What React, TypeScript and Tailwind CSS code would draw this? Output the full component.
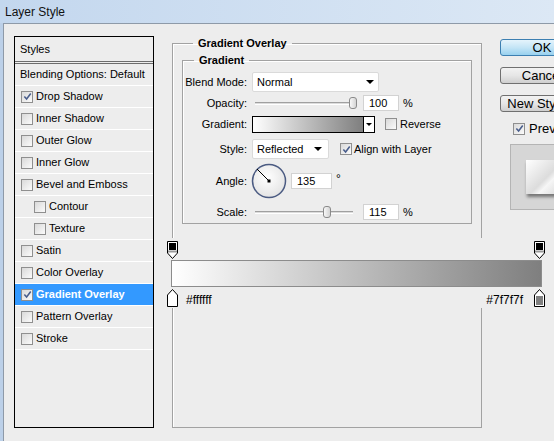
import React from 'react'

type Item = { label: string; on?: boolean; sub?: boolean; active?: boolean }

const styleItems: Item[] = [
  { label: 'Drop Shadow', on: true },
  { label: 'Inner Shadow' },
  { label: 'Outer Glow' },
  { label: 'Inner Glow' },
  { label: 'Bevel and Emboss' },
  { label: 'Contour', sub: true },
  { label: 'Texture', sub: true },
  { label: 'Satin' },
  { label: 'Color Overlay' },
  { label: 'Gradient Overlay', on: true, active: true },
  { label: 'Pattern Overlay' },
  { label: 'Stroke' },
]

// small windows-style checkbox
function Check({ on = false }: { on?: boolean }) {
  return (
    <span className="flex h-[12px] w-[12px] shrink-0 items-center justify-center border border-[#8f8f8f] bg-gradient-to-br from-[#d9d9d9] to-[#fbfbfb]">
      {on && (
        <svg viewBox="0 0 10 10" className="h-[9px] w-[9px]">
          <path d="M1.5 5 L4 7.8 L8.6 1.6" fill="none" stroke="#4a5e8c" strokeWidth="1.7" />
        </svg>
      )}
    </span>
  )
}

function Caret() {
  return (
    <svg viewBox="0 0 8 4" className="h-[4px] w-[8px]">
      <path d="M0 0 H8 L4 4 Z" fill="#000" />
    </svg>
  )
}

function Slider({ pos }: { pos: number }) {
  return (
    <div className="relative flex h-[16px] w-[104px] items-center px-[3px]">
      <div className="h-[3px] w-full border-t border-[#a0a0a0] border-b border-b-white bg-[#dcdcdc]" />
      <div
        className="absolute top-[2px] h-[12px] w-[8px] rounded-[3px] border border-[#8a8a8a] bg-gradient-to-r from-[#f8f8f8] to-[#d4d4d4]"
        style={{ left: pos }}
      />
    </div>
  )
}

function Field({ value, w = 'w-[36px]' }: { value: string; w?: string }) {
  return (
    <div className={`${w} flex h-[16px] items-center border border-[#d2d2d2] bg-white pl-[5px] text-[11px]`}>
      {value}
    </div>
  )
}

function TopStop() {
  return (
    <svg viewBox="0 0 11 18" className="h-[18px] w-[11px]">
      <path d="M0.5 0.5 H10.5 V12 L5.5 17.5 L0.5 12 Z" fill="#fff" stroke="#000" />
      <rect x="2" y="2" width="7" height="7" fill="#000" />
      <rect x="1" y="9.5" width="9" height="2" fill="#9a9a9a" />
    </svg>
  )
}

function BottomStop({ fill }: { fill: string }) {
  return (
    <svg viewBox="0 0 11 18" className="h-[18px] w-[11px]">
      <path d="M5.5 0.5 L10.5 6 V17.5 H0.5 V6 Z" fill="#fff" stroke="#000" />
      <rect x="2" y="7" width="7" height="9" fill={fill} />
    </svg>
  )
}

function Button({ label, primary = false }: { label: string; primary?: boolean }) {
  return (
    <div
      className={
        primary
          ? 'flex h-[17px] w-[84px] items-center justify-center rounded-[3px] border border-[#3c7fb1] bg-gradient-to-b from-[#e5f4fc] via-[#c4e5f6] to-[#98d1ef] text-[13px] leading-none'
          : 'flex h-[17px] w-[84px] items-center justify-center rounded-[3px] border border-[#707070] bg-gradient-to-b from-[#f2f2f2] via-[#e6e6e6] to-[#cfcfcf] text-[13px] leading-none'
      }
    >
      {label}
    </div>
  )
}

export default function App() {
  return (
    <div className="relative h-[441px] w-[554px] overflow-hidden bg-[#ededed] font-['Liberation_Sans',Arial,sans-serif] text-[11px] text-black">
      {/* title bar */}
      <div className="flex h-[23px] items-center bg-gradient-to-r from-[#c3d7ee] to-[#dce8f5] pl-[5px] text-[12px] text-[#111]">
        Layer Style
      </div>

      <div className="flex h-[418px]">
        {/* window frame edge */}
        <div className="w-[3px] shrink-0 bg-[#bcd0e8]" />

        <div className="flex flex-1 items-start border-l border-t border-[#8e9aa8] pl-[10px]">
          {/* styles list */}
          <div className="mt-[12px] flex h-[392px] w-[140px] shrink-0 flex-col border border-black">
            <div className="flex h-[24px] items-center pl-[5px]">Styles</div>
            <div className="h-[3px] border-y border-[#6d6d6d]" />
            <div className="flex h-[22px] items-center border-b border-white pl-[5px]">Blending Options: Default</div>
            {styleItems.map((it) => (
              <div
                key={it.label}
                className={
                  (it.active ? 'bg-[#3399ff] font-bold text-white ' : '') +
                  (it.sub ? 'pl-[19px] ' : 'pl-[6px] ') +
                  'flex h-[22px] items-center gap-[3px] border-b border-white'
                }
              >
                <Check on={it.on} />
                <span>{it.label}</span>
              </div>
            ))}
          </div>

          {/* gradient overlay group */}
          <fieldset className="ml-[18px] mt-[13px] h-[391px] w-[310px] shrink-0 border border-[#a2a2a2] px-[9px] shadow-[inset_1px_1px_0_#fff]">
            <legend className="ml-[11px] px-[5px] font-bold leading-[13px]">Gradient Overlay</legend>

            <fieldset className="mt-[4px] h-[170px] border border-[#a2a2a2] shadow-[inset_1px_1px_0_#fff]">
              <legend className="ml-[11px] px-[5px] font-bold leading-[13px]">Gradient</legend>

              <div className="mt-[5px] flex flex-col">
                <div className="flex h-[20px] items-center">
                  <span className="w-[64px] text-right">Blend Mode:</span>
                  <div className="ml-[5px] flex h-[20px] w-[127px] items-center justify-between rounded-[2px] border border-[#dadada] bg-white pl-[4px] pr-[4px]">
                    <span>Normal</span>
                    <Caret />
                  </div>
                </div>

                <div className="mt-[1px] flex h-[20px] items-center">
                  <span className="w-[64px] text-right">Opacity:</span>
                  <div className="ml-[5px]">
                    <Slider pos={97} />
                  </div>
                  <div className="ml-[7px]">
                    <Field value="100" />
                  </div>
                  <span className="ml-[4px]">%</span>
                </div>

                <div className="mt-[1px] flex h-[20px] items-center">
                  <span className="w-[64px] text-right">Gradient:</span>
                  <div className="ml-[5px] h-[17px] w-[112px] border border-black bg-gradient-to-r from-white to-[#7f7f7f]" />
                  <div className="flex h-[17px] w-[11px] items-center justify-center border border-l-0 border-black bg-white">
                    <svg viewBox="0 0 6 3" className="h-[3px] w-[6px]">
                      <path d="M0 0 H6 L3 3 Z" fill="#000" />
                    </svg>
                  </div>
                  <div className="ml-[10px] flex items-center gap-[3px]">
                    <Check />
                    <span>Reverse</span>
                  </div>
                </div>

                <div className="mt-[5px] flex h-[20px] items-center">
                  <span className="w-[64px] text-right">Style:</span>
                  <div className="ml-[5px] flex h-[20px] w-[77px] items-center justify-between rounded-[2px] border border-[#dadada] bg-white pl-[4px] pr-[6px]">
                    <span>Reflected</span>
                    <Caret />
                  </div>
                  <div className="ml-[11px] flex items-center gap-[2px]">
                    <Check on />
                    <span>Align with Layer</span>
                  </div>
                </div>

                <div className="mt-[4px] flex h-[36px] items-center">
                  <span className="w-[64px] text-right">Angle:</span>
                  <svg viewBox="0 0 36 36" className="ml-[4px] h-[36px] w-[36px]">
                    <defs>
                      <radialGradient id="dial" cx="0.45" cy="0.4" r="0.6">
                        <stop offset="0" stopColor="#ffffff" />
                        <stop offset="1" stopColor="#e4e4e4" />
                      </radialGradient>
                    </defs>
                    <circle cx="18" cy="18" r="16.5" fill="url(#dial)" stroke="#4b5b82" strokeWidth="1.5" />
                    <line x1="18" y1="18" x2="6" y2="6" stroke="#000" strokeWidth="1" />
                    <rect x="16.5" y="16.5" width="3" height="3" fill="#000" />
                  </svg>
                  <div className="ml-[4px]">
                    <Field value="135" w="w-[41px]" />
                  </div>
                  <span className="ml-[4px] self-start pt-[7px] text-[12px]">°</span>
                </div>

                <div className="mt-[3px] flex h-[20px] items-center">
                  <span className="w-[64px] text-right">Scale:</span>
                  <div className="ml-[5px]">
                    <Slider pos={71} />
                  </div>
                  <div className="ml-[7px]">
                    <Field value="115" />
                  </div>
                  <span className="ml-[4px]">%</span>
                </div>
              </div>
            </fieldset>
          </fieldset>

          {/* dialog buttons + preview */}
          <div className="ml-[18px] mt-[15px] flex w-[84px] shrink-0 flex-col">
            <Button label="OK" primary />
            <div className="mt-[11px]">
              <Button label="Cancel" />
            </div>
            <div className="mt-[11px]">
              <Button label="New Style..." />
            </div>
            <div className="mt-[7px] flex items-center gap-[4px] pl-[13px] text-[13px]">
              <Check on />
              <span>Preview</span>
            </div>
            <div className="ml-[10px] mt-[5px] flex h-[66px] w-[74px] items-start border border-[#b4b4b4] bg-[#d6d6d6] pl-[15px] pt-[15px]">
              <div className="h-[34px] w-[50px] bg-[linear-gradient(135deg,#ffffff_0%,#dcdcdc_45%,#f6f6f6_55%,#c6c6c6_100%)] shadow-[1px_3px_3px_rgba(0,0,0,0.45)]" />
            </div>
          </div>
        </div>
      </div>

      {/* gradient editor strip, drawn over the group box */}
      <div className="absolute left-[164px] top-[238px] h-[70px] w-[390px] bg-[#ededed] pl-[3px] pt-[3px]">
        <div className="flex w-[378px] justify-between">
          <TopStop />
          <TopStop />
        </div>
        <div className="ml-[4px] mt-[1px] h-[27px] w-[371px] border border-[#8c8c8c] bg-gradient-to-r from-white to-[#7f7f7f]" />
        <div className="flex w-[378px] items-center">
          <BottomStop fill="#ffffff" />
          <span className="ml-[8px] mt-[4px] text-[12px]">#ffffff</span>
          <span className="ml-auto mr-[11px] mt-[4px] text-[12px]">#7f7f7f</span>
          <BottomStop fill="#7f7f7f" />
        </div>
      </div>
    </div>
  )
}
